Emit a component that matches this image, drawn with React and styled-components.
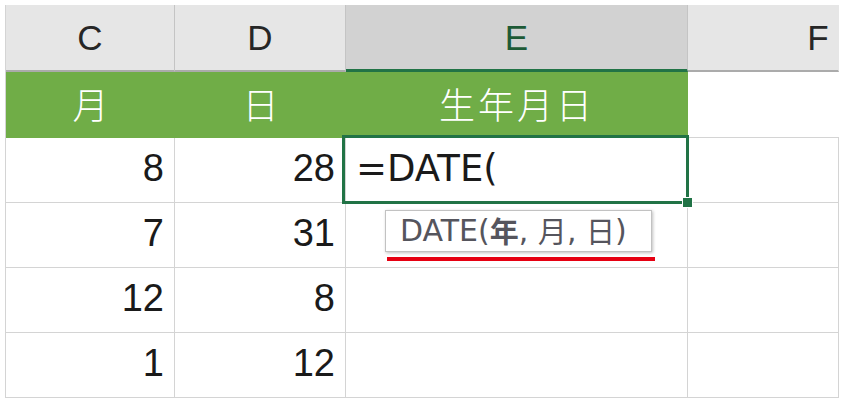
import React from 'react';
import styled, { createGlobalStyle } from 'styled-components';

const GlobalStyle = createGlobalStyle`
  html, body {
    margin: 0;
    padding: 0;
    background: #fff;
  }
  body {
    font-family: "Liberation Sans", Arial, sans-serif;
  }
`;

const GREEN = '#217346';
const GRID = '#d4d4d4';

const Page = styled.div`
  padding: 5px 0 0 5px;
`;

const Sheet = styled.div`
  position: relative;
  display: grid;
  grid-template-columns: 169px 171px 342px 151px;
  grid-template-rows: 67px 66px repeat(4, 65px);
  border-left: 1px solid ${GRID};
  width: max-content;
`;

const ColHeader = styled.div`
  box-sizing: border-box;
  display: flex;
  align-items: center;
  justify-content: center;
  background: ${(p) => (p.$active ? '#d2d2d2' : '#e6e6e6')};
  border-right: 1px solid ${(p) => (p.$last ? 'transparent' : '#c4c4c4')};
  border-bottom: ${(p) => (p.$active ? `3px solid ${GREEN}` : '2px solid #ababab')};
  color: ${(p) => (p.$active ? '#1d5a36' : '#262626')};
  font-size: 35px;
  padding-top: ${(p) => (p.$active ? '1px' : '0')};
  padding-left: ${(p) => (p.$last ? '110px' : '0')};
`;

const TitleCell = styled.div`
  box-sizing: border-box;
  display: flex;
  align-items: center;
  justify-content: center;
  background: ${(p) => (p.$blank ? '#fff' : '#70ad47')};
  border-bottom: 1px solid ${(p) => (p.$blank ? GRID : '#70ad47')};
  color: #fff;
  font-family: "Noto Sans CJK JP", sans-serif;
  font-weight: 300;
  font-size: 36px;
  letter-spacing: ${(p) => (p.$wide ? '3px' : '0')};
  padding-bottom: 4px;
`;

const Cell = styled.div`
  box-sizing: border-box;
  display: flex;
  align-items: center;
  justify-content: ${(p) => (p.$left ? 'flex-start' : 'flex-end')};
  border-right: 1px solid ${GRID};
  border-bottom: 1px solid ${GRID};
  padding: 0 ${(p) => (p.$left ? '0' : '10px')} 3px ${(p) => (p.$left ? '10px' : '0')};
  font-family: ${(p) => (p.$left ? '"DejaVu Sans", sans-serif' : '"Liberation Sans", Arial, sans-serif')};
  font-size: ${(p) => (p.$left ? '37px' : '38px')};
  color: #1a1a1a;
`;

const ActiveFrame = styled.div`
  position: absolute;
  left: 336px;
  top: 130px;
  width: 347px;
  height: 69px;
  box-sizing: border-box;
  border: 3px solid ${GREEN};
  pointer-events: none;
`;

const FillHandle = styled.div`
  position: absolute;
  right: -7px;
  bottom: -7px;
  width: 9px;
  height: 9px;
  background: ${GREEN};
  border: 1px solid #fff;
`;

const Tip = styled.div`
  position: absolute;
  left: 379px;
  top: 205px;
  width: 267px;
  height: 42px;
  box-sizing: border-box;
  display: flex;
  align-items: center;
  padding: 0 0 2px 14px;
  background: #fff;
  border: 1px solid #c2c2c2;
  box-shadow: 1px 1px 3px rgba(0, 0, 0, 0.25);
  font-family: "DejaVu Sans", "Noto Sans CJK JP", sans-serif;
  font-size: 30px;
  color: #55555d;
  white-space: pre;
`;

const Arg = styled.span`
  font-family: "Noto Sans CJK JP", sans-serif;
  font-weight: ${(p) => (p.$current ? 700 : 400)};
  font-size: 29px;
`;

const Underline = styled.div`
  position: absolute;
  left: 381px;
  top: 252px;
  width: 268px;
  height: 4px;
  background: #e60012;
`;

const rows = [
  [8, 28],
  [7, 31],
  [12, 8],
  [1, 12],
];

export default function App() {
  return (
    <Page>
      <GlobalStyle />
      <Sheet>
        <ColHeader>C</ColHeader>
        <ColHeader>D</ColHeader>
        <ColHeader $active>E</ColHeader>
        <ColHeader $last>F</ColHeader>

        <TitleCell>月</TitleCell>
        <TitleCell>日</TitleCell>
        <TitleCell $wide>生年月日</TitleCell>
        <TitleCell $blank />

        {rows.map(([month, day], i) => (
          <React.Fragment key={i}>
            <Cell>{month}</Cell>
            <Cell>{day}</Cell>
            <Cell $left>{i === 0 ? '=DATE(' : ''}</Cell>
            <Cell $left />
          </React.Fragment>
        ))}

        <ActiveFrame>
          <FillHandle />
        </ActiveFrame>
        <Tip>
          {'DATE('}
          <Arg $current>年</Arg>
          {', '}
          <Arg>月</Arg>
          {', '}
          <Arg>日</Arg>
          {')'}
        </Tip>
        <Underline />
      </Sheet>
    </Page>
  );
}
